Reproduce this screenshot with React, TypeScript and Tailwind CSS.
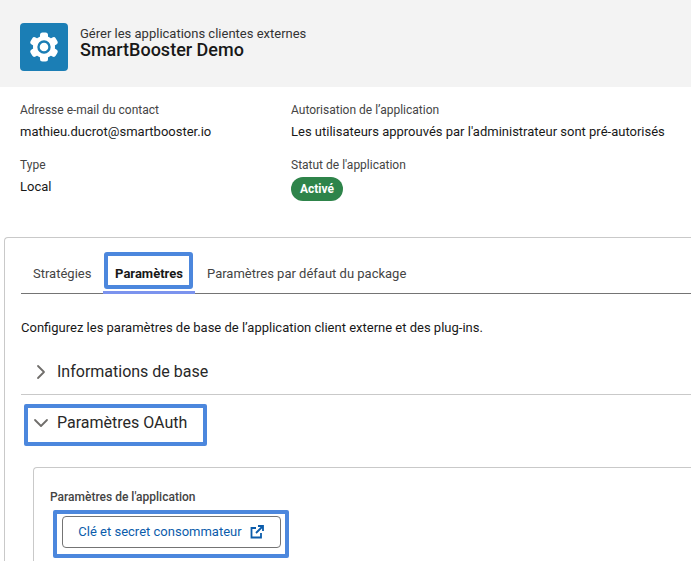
import { ChevronDown, ChevronRight } from "lucide-react";

function Gear() {
  const teeth = [0, 60, 120, 180, 240, 300];
  return (
    <svg viewBox="0 0 48 48" className="w-12 h-12">
      <g fill="#fff">
        <circle cx="24" cy="24" r="11" />
        {teeth.map((a) => (
          <rect key={a} x="20" y="9.5" width="8" height="8" rx="2.5" transform={`rotate(${a} 24 24)`} />
        ))}
      </g>
      <circle cx="24" cy="24" r="5.5" fill="none" stroke="#1b7eb5" strokeWidth="2.4" />
    </svg>
  );
}

function Field({ label, value }: { label: string; value: string }) {
  return (
    <div className="h-[55px]">
      <div className="text-[12px] leading-[16px] text-[#444]">{label}</div>
      <div className="mt-[5px] text-[13px] leading-[18px] text-[#181818]">{value}</div>
    </div>
  );
}

export default function App() {
  return (
    <div className="w-[691px] h-[561px] overflow-hidden bg-white font-['Roboto',sans-serif]">
      <header className="h-[87px] bg-[#f3f3f3] pl-5 pt-[23px] flex gap-3">
        <div className="w-12 h-12 rounded-[4px] bg-[#1b7eb5]">
          <Gear />
        </div>
        <div className="pt-[2px]">
          <div className="text-[13px] leading-[18px] text-[#333]">Gérer les applications clientes externes</div>
          <div className="text-[18px] leading-[14px] font-medium text-[#181818]">SmartBooster Demo</div>
        </div>
      </header>

      <section className="pl-5 pt-[15px] flex h-[150px]">
        <div className="w-[271px]">
          <Field label="Adresse e-mail du contact" value="mathieu.ducrot@smartbooster.io" />
          <Field label="Type" value="Local" />
        </div>
        <div>
          <Field label="Autorisation de l’application" value="Les utilisateurs approuvés par l'administrateur sont pré-autorisés" />
          <div className="text-[12px] leading-[16px] text-[#444]">Statut de l'application</div>
          <div className="mt-[4px] w-[52px] h-6 rounded-full bg-[#2e844a] text-white text-[12px] font-bold flex items-center justify-center">
            Activé
          </div>
        </div>
      </section>

      <section className="ml-1 h-[400px] border-l border-t border-[#c9c9c9] rounded-tl-[4px] pl-4 pt-[14px]">
        <nav className="h-[42px] border-b border-[#747474] flex text-[13px] text-[#444]">
          <div className="w-[82px] pl-3 pt-[13px] leading-[18px]">Stratégies</div>
          <div className="relative w-[92px] h-[42px] text-center pt-[13px] leading-[18px] font-bold text-[#181818] border-b-[3px] border-[#7b93ee]">
            Paramètres
            <div className="absolute left-[1px] top-0 w-[89px] h-[37px] border-4 border-[#4c87dd] rounded-[3px]" />
          </div>
          <div className="pl-3 pt-[13px] leading-[18px]">Paramètres par défaut du package</div>
        </nav>

        <p className="mt-[25px] text-[13px] leading-[18px] text-[#181818]">
          Configurez les paramètres de base de l’application client externe et des plug-ins.
        </p>

        <div className="mt-[14px] h-[44px] border-b border-[#c9c9c9] flex items-center pl-2 pb-[2px]">
          <ChevronRight className="w-6 h-6 text-[#706e6b]" strokeWidth={1.8} />
          <span className="ml-1 text-[16px] text-[#282828]">Informations de base</span>
        </div>

        <div className="mt-[9px] ml-[3px] w-[183px] h-[42px] border-4 border-[#4c87dd] rounded-[2px] flex items-center pl-px pb-[5px]">
          <ChevronDown className="w-6 h-6 text-[#706e6b]" strokeWidth={1.8} />
          <span className="ml-1 text-[16px] text-[#282828]">Paramètres OAuth</span>
        </div>

        <div className="mt-[21px] ml-3 h-[200px] border-l border-t border-[#c9c9c9] rounded-tl-[4px] pl-4 pt-[22px]">
          <div className="text-[12px] leading-[14px] font-medium text-[#444]">Paramètres de l'application</div>
          <div className="mt-[6px] ml-[3px] w-[236px] h-[48px] border-4 border-[#4c87dd] rounded-[2px] flex items-center justify-center pb-1">
            <button className="w-[219px] h-8 border border-[#747474] rounded-[4px] bg-white flex items-center justify-center gap-2 text-[13px] text-[#0b5cab]">
              Clé et secret consommateur
              <svg viewBox="0 0 14 14" className="w-[14px] h-[14px]" fill="none" stroke="#0b5cab" strokeWidth="1.8">
                <path d="M6 3H1.5v9.5H11V8" />
                <path d="M8 1h5v5M13 1 6 8" />
              </svg>
            </button>
          </div>
        </div>
      </section>
    </div>
  );
}
